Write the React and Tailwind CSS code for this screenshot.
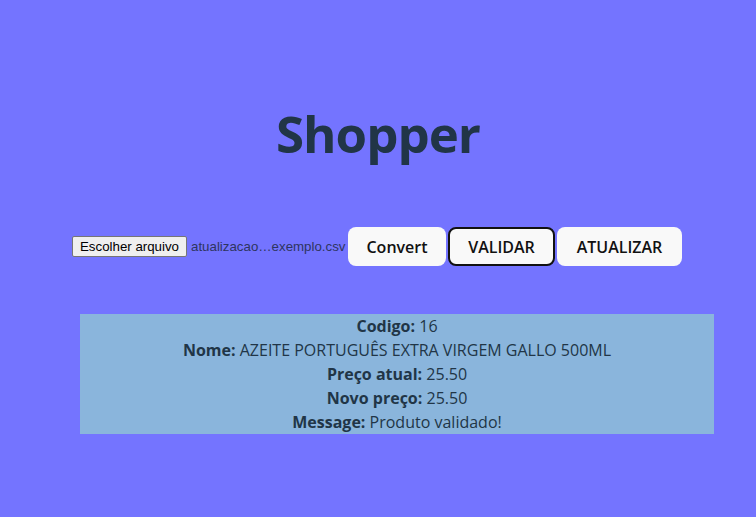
export default function App() {
  const rows = [
    ['Codigo:', '16'],
    ['Nome:', 'AZEITE PORTUGUÊS EXTRA VIRGEM GALLO 500ML'],
    ['Preço atual:', '25.50'],
    ['Novo preço:', '25.50'],
    ['Message:', 'Produto validado!'],
  ];

  return (
    <div className="min-h-[517px] w-full bg-[#7474ff] flex flex-col items-center font-['Open_Sans',sans-serif] text-[#213547]">
      <h1 className="pt-[101px] text-[51px] leading-[64px] font-bold tracking-[-1px]">Shopper</h1>

      <div className="mt-[62px] -ml-[2px] flex items-center h-[39px]">
        <div className="flex items-center font-['Liberation_Sans',sans-serif] text-[13.3px]">
          <button className="h-[21px] px-[7px] bg-[#efefef] border border-[#767676] rounded-[2px] text-black leading-none">
            Escolher arquivo
          </button>
          <span className="ml-[4px] w-[157px] whitespace-nowrap text-[#2e3560]">atualizacao…exemplo.csv</span>
        </div>
        <div className="flex gap-[2px] text-[16px] font-semibold text-[#111]">
          <button className="w-[98px] h-[39px] rounded-[8px] bg-[#f9f9f9] border border-transparent">Convert</button>
          <button className="w-[107px] h-[39px] rounded-[8px] bg-[#f9f9f9] border-2 border-[#111]">VALIDAR</button>
          <button className="w-[125px] h-[39px] rounded-[8px] bg-[#f9f9f9] border border-transparent">ATUALIZAR</button>
        </div>
      </div>

      <div className="mt-[48px] ml-[38px] w-[634px] bg-[#8ab5dc] text-center text-[16px] leading-6">
        {rows.map(([label, value]) => (
          <p key={label}>
            <span className="font-bold">{label}</span> {value}
          </p>
        ))}
      </div>
    </div>
  );
}
